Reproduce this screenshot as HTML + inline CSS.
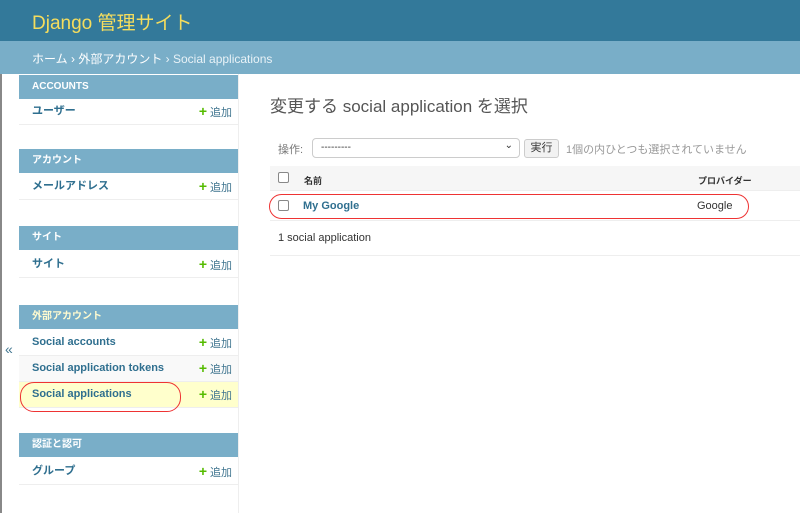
<!DOCTYPE html>
<html><head><meta charset="utf-8"><style>
*{box-sizing:border-box;margin:0;padding:0}
body{width:800px;height:513px;overflow:hidden;background:#fff;font-family:"Liberation Sans","Noto Sans CJK JP",sans-serif;font-size:11px;color:#333;position:relative}
.hdr{position:absolute;left:0;top:0;width:800px;height:41px;background:#33799a}
.hdr span{position:absolute;left:32px;top:8px;font-size:19px;color:#f5dd5d}
.bc{position:absolute;left:0;top:41px;width:800px;height:33px;background:#79aec8;color:#fff;font-size:12px;padding:9px 0 0 32px}
.bc .c{color:#e8f2f7}
.lbar{position:absolute;left:0;top:74px;width:2px;height:439px;background:#888}
.tog{position:absolute;left:5px;top:341px;color:#417690;font-size:14px}
.side{position:absolute;left:19px;top:74px;width:220px;height:439px;border-right:1px solid #eee}
.cap{position:absolute;left:0;width:219px;height:24px;background:#79aec8;color:#fff;font-size:10px;font-weight:bold;padding:0 0 0 13px;line-height:24px}
.row{position:absolute;left:0;width:219px;height:26px;border-bottom:1px solid #eee;padding:0 0 0 13px;font-weight:bold;color:#2f6f8f;font-size:11px;line-height:24px;white-space:nowrap}
.row .a{position:absolute;right:6px;top:0;font-weight:normal;color:#417690;line-height:24px}
.row .a b{color:#5b0;font-size:14px;margin-right:3px}
.title{position:absolute;left:270px;top:92px;font-size:17px;color:#555}
.act{position:absolute;left:278px;top:141px;color:#777;font-size:11px}
.sel{position:absolute;left:312px;top:138px;width:208px;height:20px;border:1px solid #ccc;border-radius:4px;padding:3px 8px;font-size:10px;color:#333}
.btn{position:absolute;left:524px;top:139px;width:35px;height:19px;border:1px solid #ccc;border-radius:3px;background:#f2f2f2;font-size:11px;line-height:17px;text-align:center;white-space:nowrap;color:#333}
.cnt{position:absolute;left:566px;top:141px;color:#999;font-size:11px}
.th{position:absolute;left:270px;top:166px;width:530px;height:25px;background:#f6f6f6;border-bottom:1px solid #eee}
.cb{position:absolute;width:11px;height:11px;border:1px solid #888;border-radius:2px;background:#fff}
.tr{position:absolute;left:270px;top:191px;width:530px;height:30px;border-bottom:1px solid #eee}
.ov{position:absolute;border:1.5px solid #e33;border-radius:14px}
</style></head><body>
<div class="hdr"><span>Django 管理サイト</span></div>
<div class="bc"><span>ホーム</span> › <span>外部アカウント</span> <span class="c">› Social applications</span></div>
<div class="lbar"></div><div class="tog">«</div>
<div class="side">
<div class="cap" style="top:1px">ACCOUNTS</div>
<div class="row" style="top:25px">ユーザー<span class="a"><b>+</b>追加</span></div>
<div class="cap" style="top:75px">アカウント</div>
<div class="row" style="top:100px">メールアドレス<span class="a"><b>+</b>追加</span></div>
<div class="cap" style="top:152px">サイト</div>
<div class="row" style="top:178px">サイト<span class="a"><b>+</b>追加</span></div>
<div class="cap" style="top:231px;color:#fffbd0">外部アカウント</div>
<div class="row" style="top:256px">Social accounts<span class="a"><b>+</b>追加</span></div>
<div class="row" style="top:282px;background:#f9f9f9">Social application tokens<span class="a"><b>+</b>追加</span></div>
<div class="row" style="top:308px;background:#ffffcc">Social applications<span class="a"><b>+</b>追加</span></div>
<div class="cap" style="top:359px">認証と認可</div>
<div class="row" style="top:385px">グループ<span class="a"><b>+</b>追加</span></div>
</div>
<div class="ov" style="left:20px;top:382px;width:161px;height:30px"></div>
<div class="title">変更する social application を選択</div>
<div class="act">操作:</div>
<div class="sel">---------<span style="position:absolute;right:6px;top:1px;font-size:10px">⌄</span></div>
<div class="btn">実行</div>
<div class="cnt">1個の内ひとつも選択されていません</div>
<div class="th"><div class="cb" style="left:8px;top:6px"></div><span style="position:absolute;left:34px;top:8px;font-size:9px;font-weight:bold">名前</span><span style="position:absolute;left:428px;top:8px;font-size:9px;font-weight:bold">プロバイダー</span></div>
<div class="tr"><div class="cb" style="left:8px;top:9px"></div><span style="position:absolute;left:33px;top:9px;font-weight:bold;color:#2f6f8f">My Google</span><span style="position:absolute;left:427px;top:9px;color:#333">Google</span></div>
<div class="ov" style="left:269px;top:194px;width:480px;height:25px"></div>
<div style="position:absolute;left:278px;top:232px;color:#333">1 social application</div>
<div style="position:absolute;left:270px;top:255px;width:530px;height:1px;background:#eee"></div>
</body></html>
